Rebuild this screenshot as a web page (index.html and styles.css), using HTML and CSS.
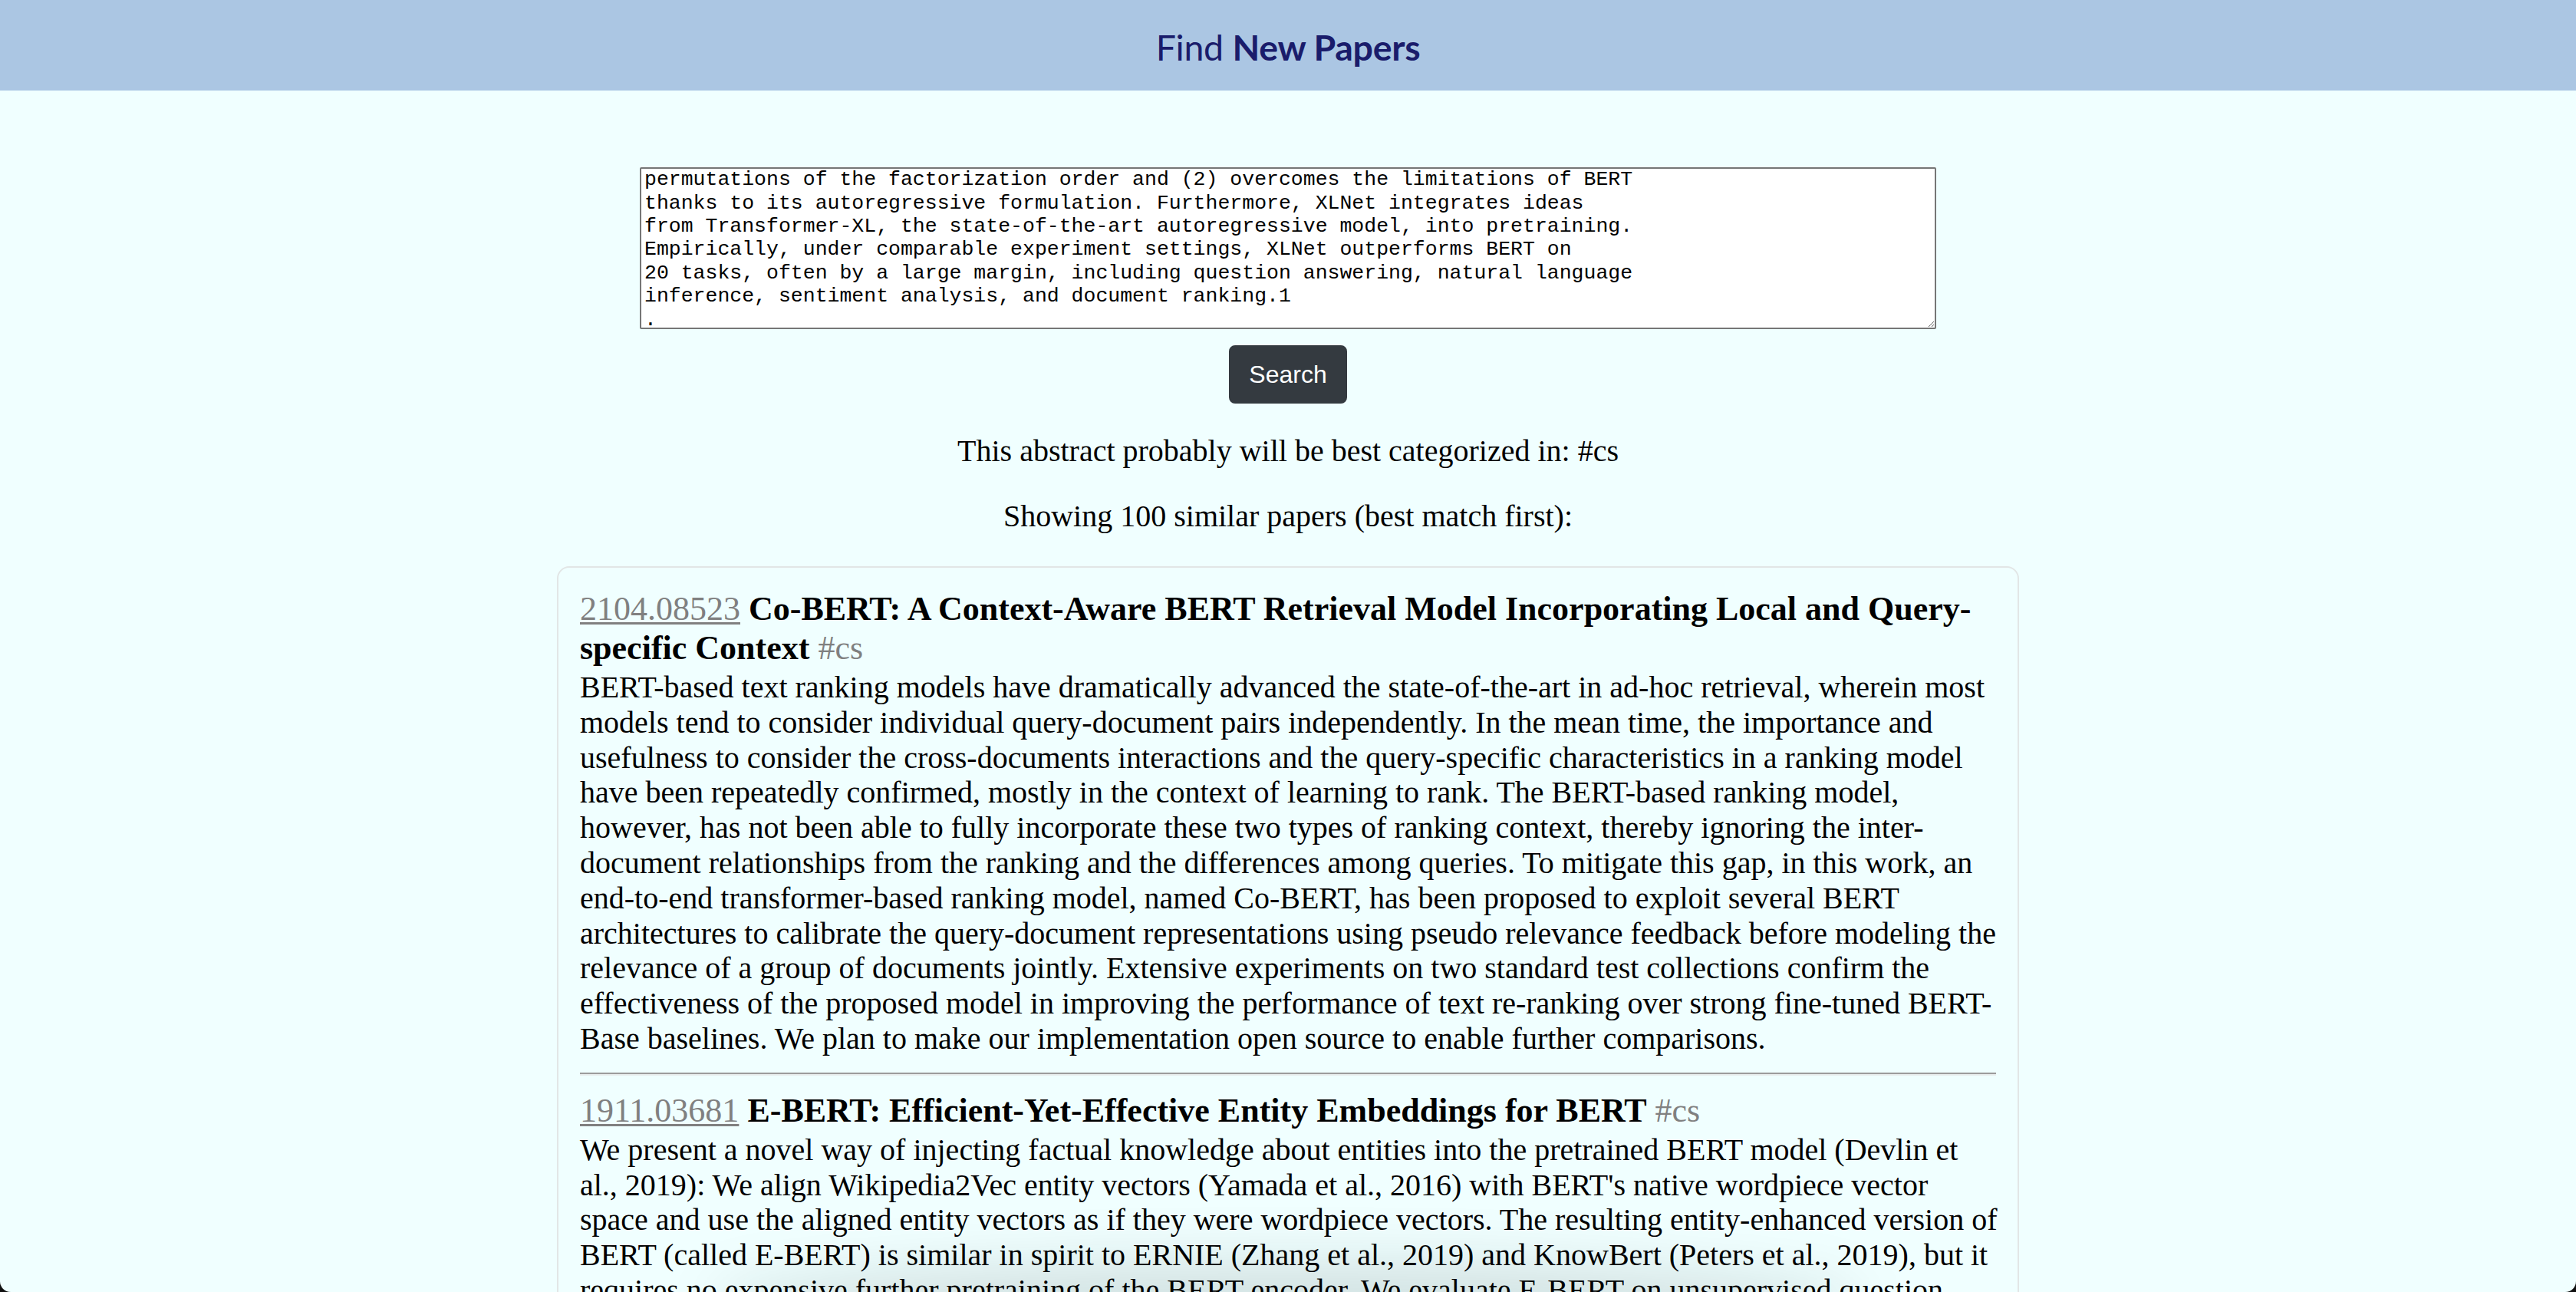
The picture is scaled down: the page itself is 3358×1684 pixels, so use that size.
FILE: index.html
```html
<!DOCTYPE html>
<html lang="en">
<head>
<meta charset="utf-8">
<title>Find New Papers</title>
<link rel="stylesheet" href="styles.css">
</head>
<body>
<header class="topbar">
  <h1 class="brand">Find <b>New Papers</b></h1>
</header>
<main class="main">
  <form class="search-form">
    <textarea class="query" name="abstract" spellcheck="false">With the capability of modeling bidirectional
contexts, denoising autoencoding based pretraining like BERT achieves
better performance than pretraining approaches based on autoregressive
language modeling. However, relying on corrupting the input with masks,
BERT neglects dependency between the masked positions and suffers from a
pretrain-finetune discrepancy. In light of these pros and cons, we propose
XLNet, a generalized autoregressive pretraining method that (1) enables
learning bidirectional contexts by maximizing the expected likelihood over all
permutations of the factorization order and (2) overcomes the limitations of BERT
thanks to its autoregressive formulation. Furthermore, XLNet integrates ideas
from Transformer-XL, the state-of-the-art autoregressive model, into pretraining.
Empirically, under comparable experiment settings, XLNet outperforms BERT on
20 tasks, often by a large margin, including question answering, natural language
inference, sentiment analysis, and document ranking.1
.</textarea>
    <button type="button" class="btn-search">Search</button>
  </form>
  <p class="info">This abstract probably will be best categorized in: #cs</p>
  <p class="info info-last">Showing 100 similar papers (best match first):</p>
  <section class="results">
    <article class="paper">
      <div class="paper-title"><a class="paper-id" href="#">2104.08523</a> <b>Co-BERT: A Context-Aware BERT Retrieval Model Incorporating Local and Query-specific Context</b> <span class="tag">#cs</span></div>
      <div class="paper-abstract">BERT-based text ranking models have dramatically advanced the state-of-the-art in ad-hoc retrieval, wherein most models tend to consider individual query-document pairs independently. In the mean time, the importance and usefulness to consider the cross-documents interactions and the query-specific characteristics in a ranking model have been repeatedly confirmed, mostly in the context of learning to rank. The BERT-based ranking model, however, has not been able to fully incorporate these two types of ranking context, thereby ignoring the inter-document relationships from the ranking and the differences among queries. To mitigate this gap, in this work, an end-to-end transformer-based ranking model, named Co-BERT, has been proposed to exploit several BERT architectures to calibrate the query-document representations using pseudo relevance feedback before modeling the relevance of a group of documents jointly. Extensive experiments on two standard test collections confirm the effectiveness of the proposed model in improving the performance of text re-ranking over strong fine-tuned BERT-Base baselines. We plan to make our implementation open source to enable further comparisons.</div>
    </article>
    <hr class="divider">
    <article class="paper">
      <div class="paper-title"><a class="paper-id" href="#">1911.03681</a> <b>E-BERT: Efficient-Yet-Effective Entity Embeddings for BERT</b> <span class="tag">#cs</span></div>
      <div class="paper-abstract">We present a novel way of injecting factual knowledge about entities into the pretrained BERT model (Devlin et al., 2019): We align Wikipedia2Vec entity vectors (Yamada et al., 2016) with BERT's native wordpiece vector space and use the aligned entity vectors as if they were wordpiece vectors. The resulting entity-enhanced version of BERT (called E-BERT) is similar in spirit to ERNIE (Zhang et al., 2019) and KnowBert (Peters et al., 2019), but it requires no expensive further pretraining of the BERT encoder. We evaluate E-BERT on unsupervised question answering (QA), supervised relation classification (RC) and entity linking (EL). On all three tasks, E-BERT outperforms BERT and other baselines. We also show quantitatively that the original BERT model is overly reliant on the surface form of entity names (e.g., guessing that someone with an Italian-sounding name speaks Italian), and that E-BERT mitigates this problem.</div>
    </article>
  </section>
</main>
<div class="window-shadow" aria-hidden="true"></div>
<div class="window-frame" aria-hidden="true"></div>
<script src="script.js"></script>
</body>
</html>
```

FILE: styles.css
```css
html, body {
  margin: 0;
  padding: 0;
}

body {
  background: #f0ffff;
  font-family: "Liberation Serif", "Times New Roman", serif;
  font-size: 40px;
  color: #000;
}

.topbar {
  height: 118px;
  background: #abc6e3;
  display: flex;
  align-items: center;
  justify-content: center;
}

.brand {
  margin: 0;
  padding-top: 4px;
  font-family: Lato, "Noto Sans", sans-serif;
  font-weight: 400;
  font-size: 46.5px;
  color: #1a1c6b;
  letter-spacing: -0.3px;
}

.brand b {
  font-weight: 700;
}

.main {
  display: flex;
  flex-direction: column;
  align-items: center;
}

.search-form {
  margin-top: 100px;
  display: flex;
  flex-direction: column;
  align-items: center;
}

.query {
  box-sizing: border-box;
  width: 1690px;
  height: 211px;
  margin: 0;
  padding: 4px;
  border: 2px solid #767676;
  border-radius: 2px;
  background: #fff;
  font-family: "Liberation Mono", "Courier New", monospace;
  font-size: 26.5px;
  line-height: 30.4px;
  color: #000;
  white-space: pre;
  overflow: hidden;
  resize: both;
}

.btn-search {
  margin-top: 21px;
  box-sizing: border-box;
  height: 76px;
  padding: 12px 24px;
  border: 2px solid #343a40;
  border-radius: 8px;
  background: #343a40;
  color: #fff;
  font-family: "Liberation Sans", Arial, sans-serif;
  font-size: 32px;
  line-height: 48px;
}

.info {
  margin: 39px 0 0;
  line-height: 46px;
  text-align: center;
}

.info-last {
  margin-bottom: 42px;
}

.results {
  box-sizing: border-box;
  width: 1906px;
  padding: 28px 24px 26px 28px;
  border: 2px solid #e2e6e6;
  border-radius: 16px;
}

.paper-title {
  font-size: 44px;
  line-height: 51px;
}

.paper-id {
  color: #808080;
  text-decoration: underline;
  text-decoration-thickness: 3px;
  text-underline-offset: 3px;
}

.tag {
  color: #808080;
}

.paper-abstract {
  margin-top: 3px;
  line-height: 45.8px;
}

.divider {
  margin: 21px 4px 20px 0;
  border: 0;
  border-top: 2px solid #9c9c9c;
  border-bottom: 2px solid #e8eded;
  height: 0;
}

.window-shadow {
  position: fixed;
  left: 50%;
  bottom: -70px;
  width: 1500px;
  height: 110px;
  transform: translateX(-50%);
  border-radius: 50%;
  background: rgba(0, 20, 20, 0.12);
  filter: blur(36px);
  pointer-events: none;
}

.window-frame {
  position: fixed;
  inset: 0;
  border-radius: 0 0 14px 14px;
  box-shadow: 0 0 0 40px #111;
  pointer-events: none;
}
```

FILE: script.js
```js
var q = document.querySelector('.query');
q.scrollTop = q.scrollHeight - q.clientHeight - 9;
```
